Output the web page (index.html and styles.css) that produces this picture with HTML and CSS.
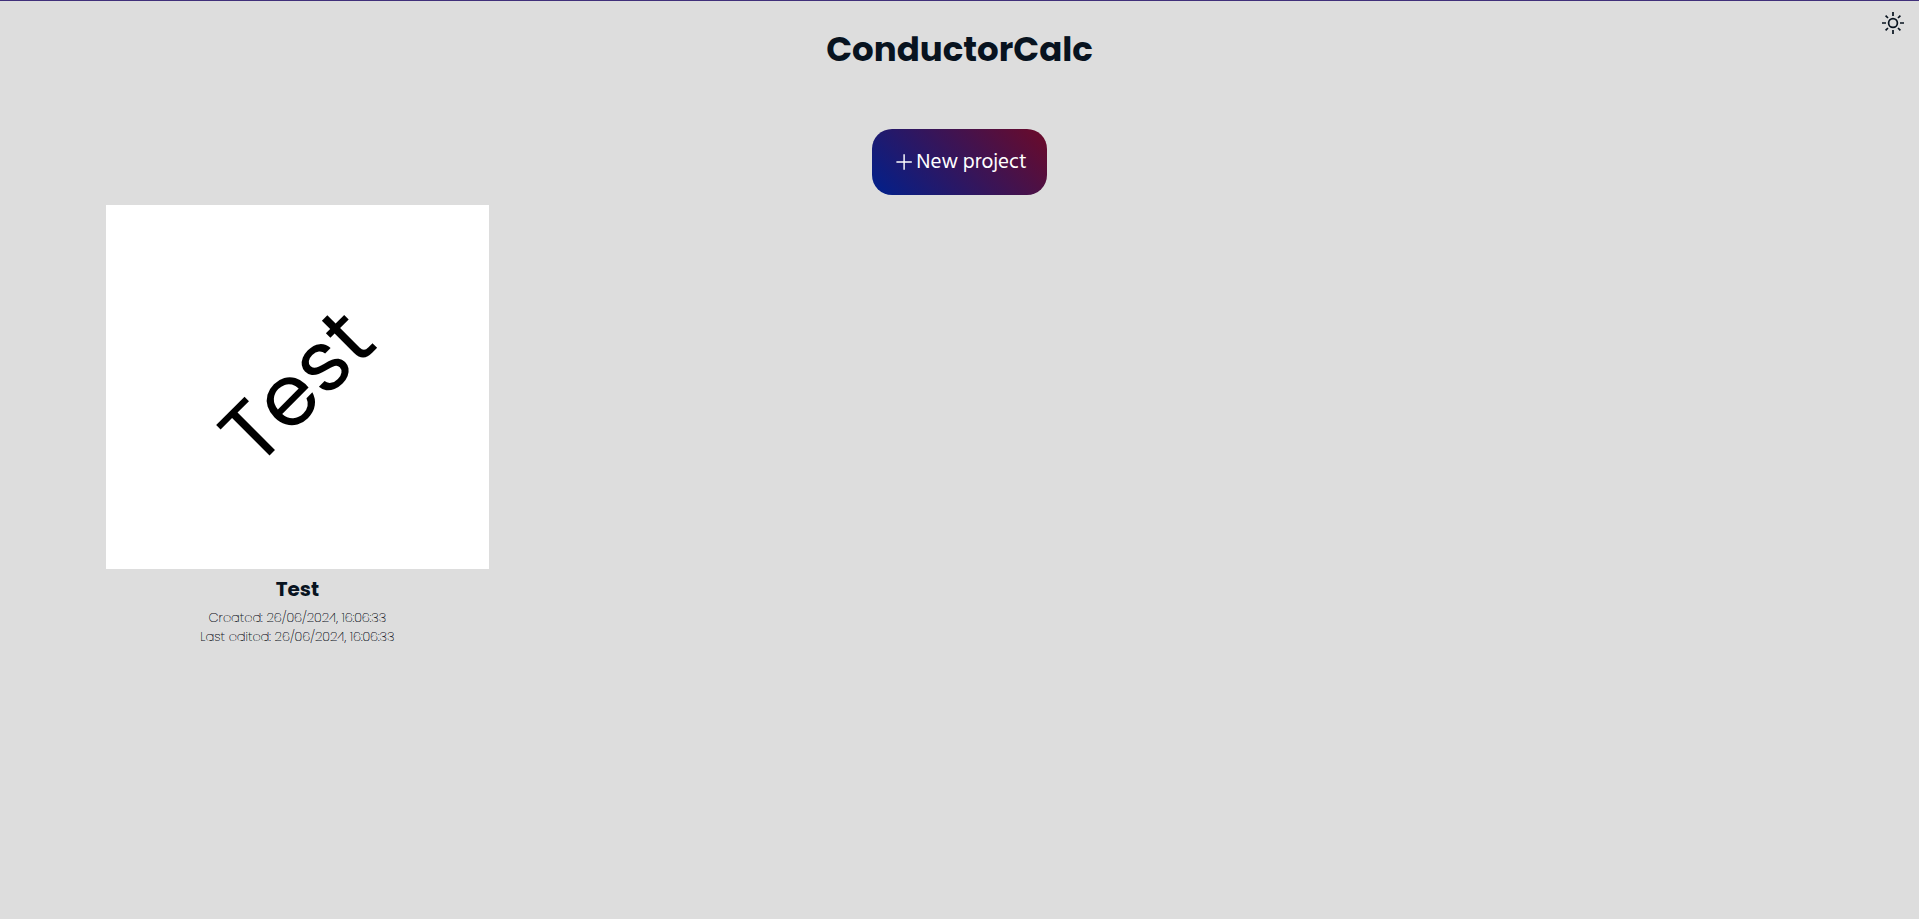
FILE: index.html
```html
<!DOCTYPE html>
<html lang="en">
<head>
<meta charset="utf-8">
<title>ConductorCalc</title>
<link rel="stylesheet" href="styles.css">
</head>
<body>
<header class="header">
  <h1 class="title">ConductorCalc</h1>
  <button class="theme-toggle" type="button" aria-label="Toggle theme">
    <svg class="sun" viewBox="0 0 24 24" aria-hidden="true">
      <circle cx="12" cy="12" r="4.4"/>
      <path d="M12 1v4M12 19v4M1 12h4M19 12h4M4.600 4.600l2.400 2.400M17 17l2.400 2.400M19.400 4.600L17 7M7 17l-2.400 2.400"/>
    </svg>
  </button>
</header>
<main class="main">
  <button class="new-project" type="button">
    <svg class="plus" viewBox="0 0 20 20" aria-hidden="true"><path d="M11 3v14M4 10h14"/></svg>
    <span>New project</span>
  </button>
  <section class="projects" aria-label="Projects">
    <article class="card">
      <div class="thumb"><span class="thumb-text">Test</span></div>
      <h2 class="name">Test</h2>
      <p class="date">Created: 26/06/2024, 16:06:33</p>
      <p class="date">Last edited: 26/06/2024, 16:06:33</p>
    </article>
  </section>
</main>
</body>
</html>
```
FILE: styles.css
```css
* { box-sizing: border-box; }
body {
  margin: 0;
  min-height: 100vh;
  background: #ddd;
  border-top: 1px solid #40307a;
  color: #08131f;
  font-family: Poppins, Inter, sans-serif;
}
.header { position: relative; padding: 24px 16px; }
.title {
  margin: 0;
  text-align: center;
  font-size: 34px;
  line-height: 48px;
  font-weight: 700;
}
.theme-toggle {
  position: absolute;
  top: 10px;
  right: 14px;
  display: flex;
  padding: 0;
  border: 0;
  background: none;
  color: inherit;
}
.sun { width: 24px; height: 24px; fill: none; stroke: currentColor; stroke-width: 1.7; }
.main { display: flex; flex-direction: column; align-items: center; gap: 10px; padding-top: 32px; }
.new-project {
  display: flex;
  align-items: center;
  gap: 2px;
  padding: 20px;
  border: 0;
  border-radius: 20px;
  background: linear-gradient(45deg, #00208c, #6c0a28);
  color: #fff;
  font-family: "Hind Siliguri", "Noto Sans", sans-serif;
  font-size: 21px;
  font-weight: 400;
  line-height: 26px;
}
.plus { width: 22px; height: 22px; fill: none; stroke: currentColor; stroke-width: 1.3; }
.projects {
  display: grid;
  grid-template-columns: repeat(4, 1fr);
  width: 100%;
  padding: 0 4%;
}
.card { display: flex; flex-direction: column; align-items: center; }
.thumb {
  display: flex;
  align-items: center;
  justify-content: center;
  width: 20vw;
  aspect-ratio: 384 / 364;
  background: #fff;
  color: #000;
}
.thumb-text { font-size: 85px; line-height: 128px; transform: rotate(-45deg); }
.name { margin: 4px 0 3px; font-size: 20px; line-height: 32px; font-weight: 700; }
.date {
  margin: 0;
  font-size: 13px;
  line-height: 19px;
  font-weight: 200;
  color: #1c242c;
  text-shadow: 0 0 0 #1c242c, 0 0 0 #1c242c;
}
```
